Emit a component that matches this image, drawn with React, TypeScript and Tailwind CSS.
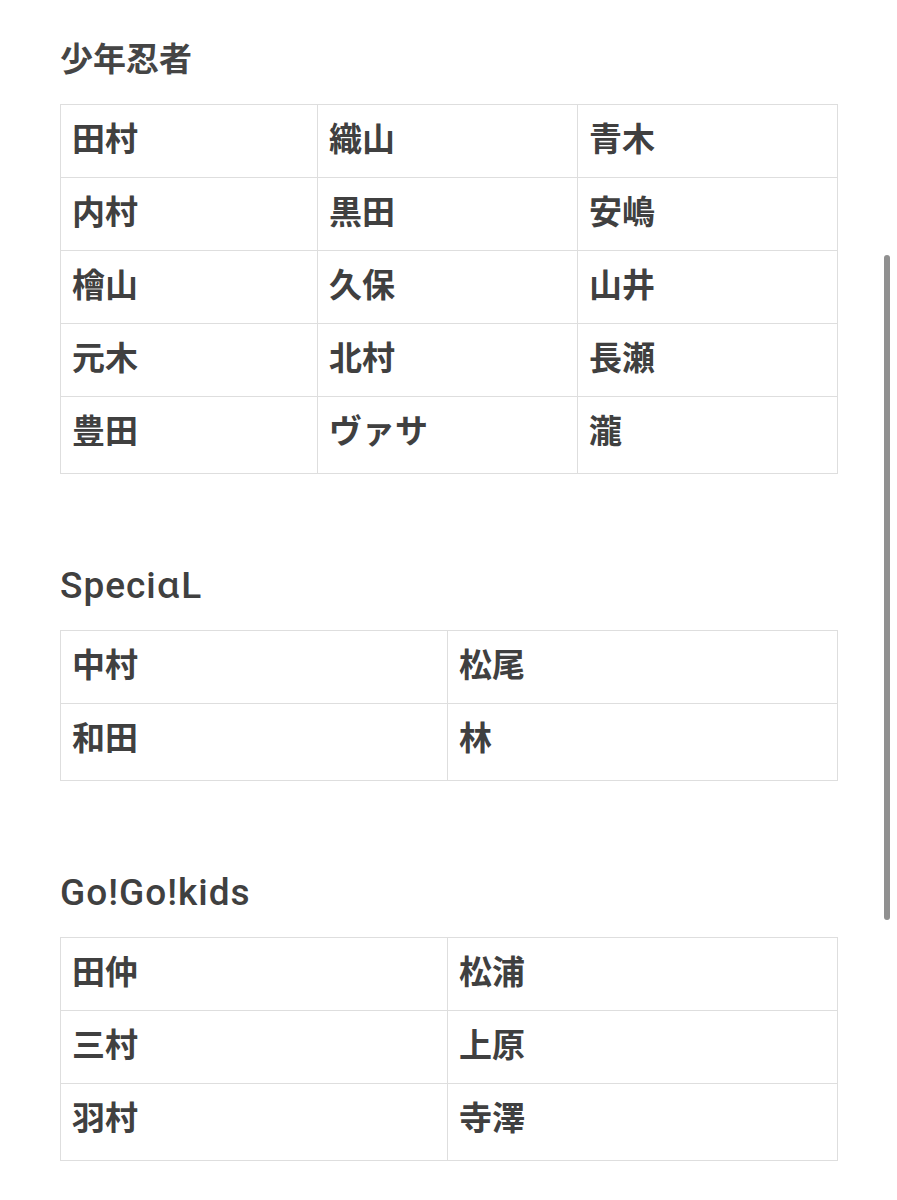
import React from 'react';

type Group = {
  title: string;
  latin?: boolean;
  cols: number[];
  rows: string[][];
};

const groups: Group[] = [
  {
    title: '少年忍者',
    cols: [257, 260, 260],
    rows: [
      ['田村', '織山', '青木'],
      ['内村', '黒田', '安嶋'],
      ['檜山', '久保', '山井'],
      ['元木', '北村', '長瀬'],
      ['豊田', 'ヴァサ', '瀧'],
    ],
  },
  {
    title: 'SpeciɑL',
    latin: true,
    cols: [387, 390],
    rows: [
      ['中村', '松尾'],
      ['和田', '林'],
    ],
  },
  {
    title: 'Go!Go!kids',
    latin: true,
    cols: [387, 390],
    rows: [
      ['田仲', '松浦'],
      ['三村', '上原'],
      ['羽村', '寺澤'],
    ],
  },
];

const cjk = "font-['Noto_Sans_CJK_JP',sans-serif]";

const Heading = ({ title, latin }: { title: string; latin?: boolean }) => {
  if (latin) {
    return (
      <h2 className="font-['Roboto','Noto_Sans_CJK_JP',sans-serif] text-[37px] leading-none font-medium text-[#404040] mb-[26px] tracking-[1px]">
        {title}
      </h2>
    );
  }
  return (
    <h2 className={`${cjk} text-[33px] leading-none font-bold text-[#454545] mb-[30px]`}>
      {title}
    </h2>
  );
};

const NameTable = ({ group }: { group: Group }) => {
  return (
    <table className="w-full table-fixed border-collapse border border-[#dedede]">
      <colgroup>
        {group.cols.map((w, i) => (
          <col key={i} style={{ width: w }} />
        ))}
      </colgroup>
      <tbody>
        {group.rows.map((row, i) => (
          <tr
            key={i}
            className={
              i === group.rows.length - 1 ? 'h-[77px] align-top' : 'h-[73px] align-top'
            }
          >
            {row.map((name, j) => (
              <td
                key={j}
                className={`${cjk} border border-[#dedede] px-[11px] pt-[16px] text-[33px] leading-none font-bold text-[#404040]`}
              >
                {name}
              </td>
            ))}
          </tr>
        ))}
      </tbody>
    </table>
  );
};

const App = () => {
  return (
    <div className="relative bg-white min-h-[1200px] w-full overflow-hidden">
      <div className="pl-[60px] pr-[60px] pt-[41px]">
        {groups.map((g, i) => (
          <section key={g.title} className={i === 0 ? '' : 'mt-[93px]'}>
            <Heading title={g.title} latin={g.latin} />
            <NameTable group={g} />
          </section>
        ))}
      </div>
      <div className="absolute left-[884px] top-[255px] w-[6px] h-[665px] rounded-full bg-[#909090]" />
    </div>
  );
};

export default App;
